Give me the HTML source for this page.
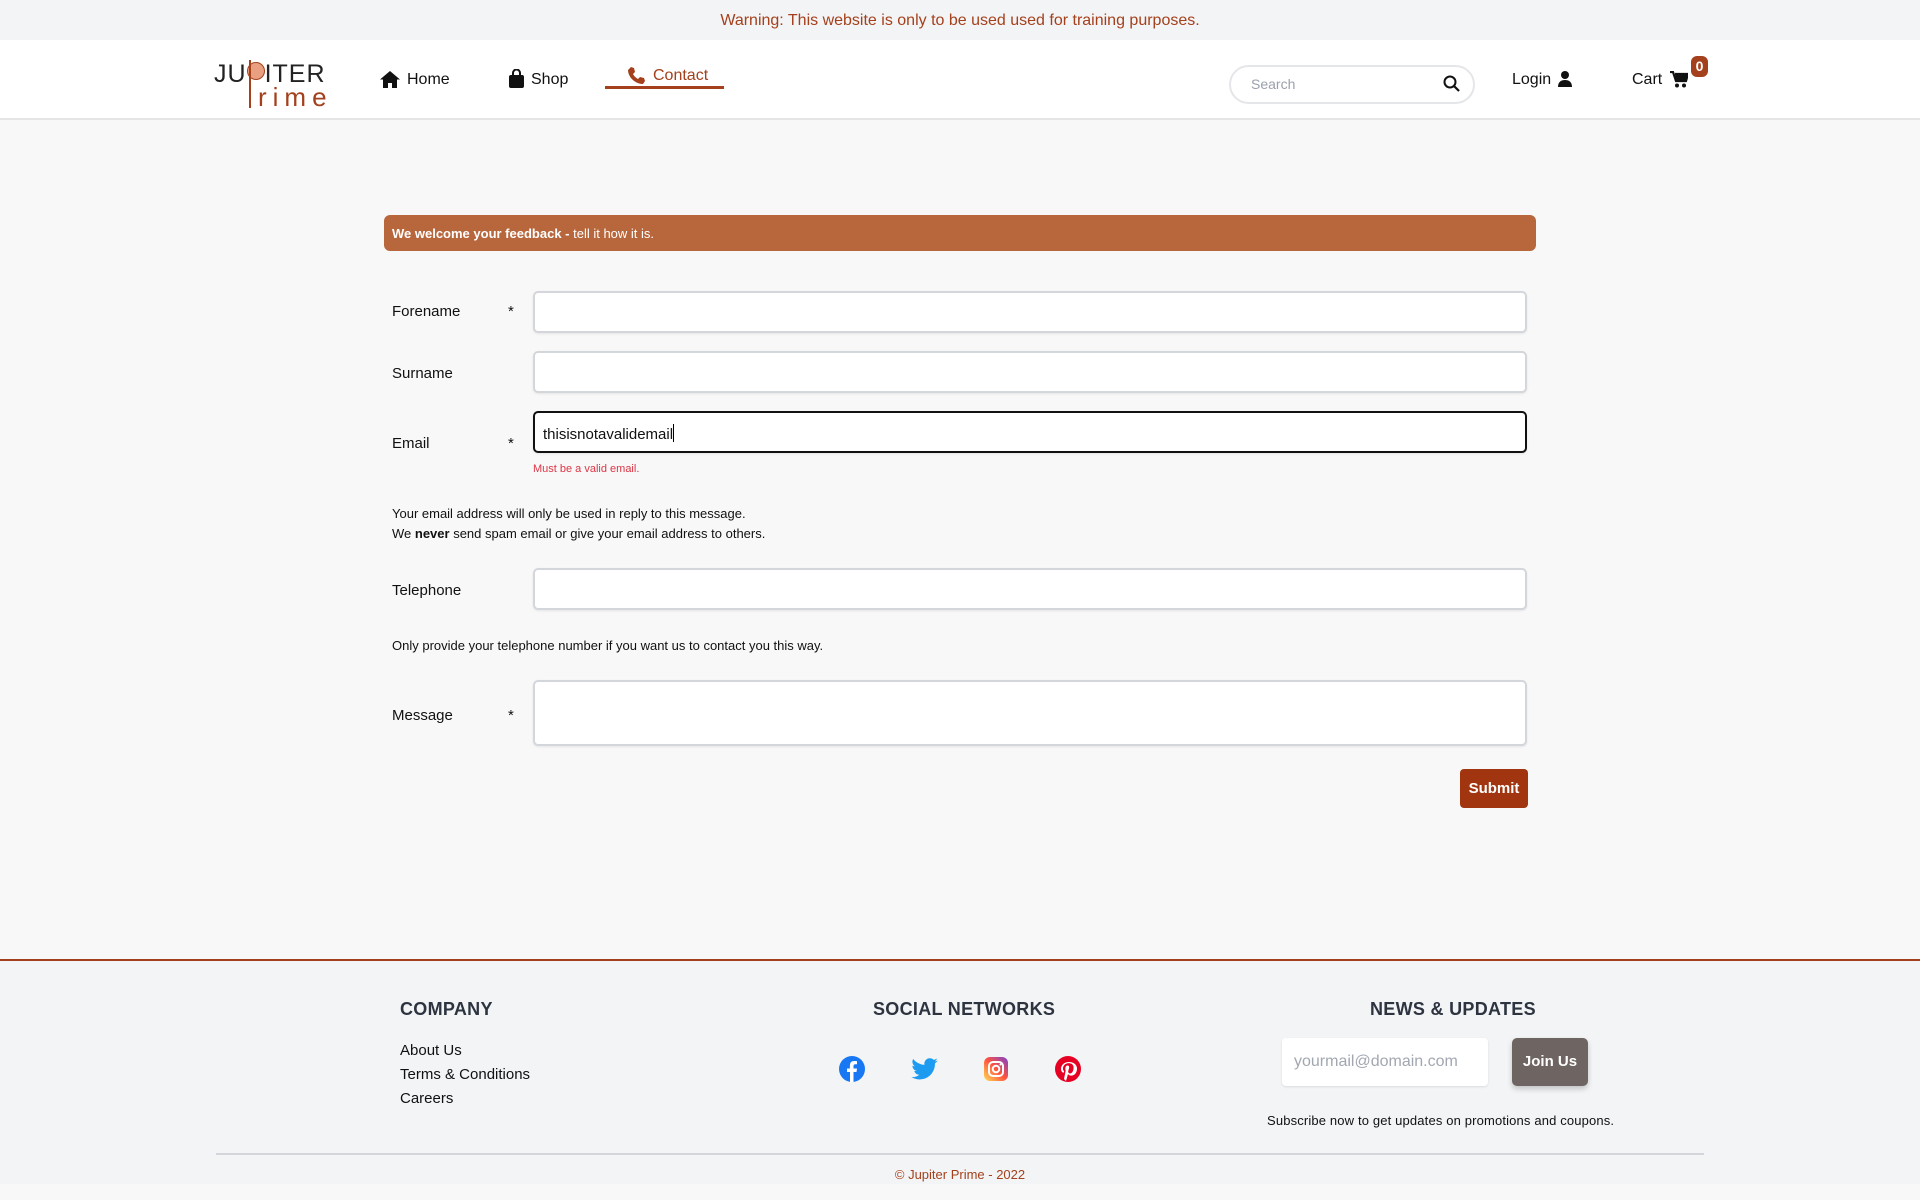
<!DOCTYPE html>
<html><head><meta charset="utf-8"><style>
*{box-sizing:border-box;margin:0;padding:0}
body{width:1920px;height:1200px;position:relative;background:#f8f8f8;font-family:"Liberation Sans",sans-serif;color:#111;overflow:hidden}
.a{position:absolute;white-space:nowrap}
.warn{left:0;top:0;width:1920px;height:40px;background:#f3f4f6;text-align:center;line-height:42px;font-size:16px;color:#a4401c}
.hdr{left:0;top:40px;width:1920px;height:80px;background:#fff;border-bottom:2px solid #e5e5e5}
.nav{font-size:16px;color:#111}
.inp{background:#fff;border:2px solid #d3d6da;border-radius:5px;box-shadow:0 1px 2px rgba(0,0,0,.08);left:533px;width:994px;height:42px}
.lbl{left:392px;font-size:15px}
.ast{left:508px;font-size:15px}
.help{left:392px;font-size:13px}
h4{font-weight:900;letter-spacing:.3px}
</style></head><body>
<div class="a warn">Warning: This website is only to be used used for training purposes.</div>
<div class="a hdr"></div>
<!-- logo -->
<div class="a" style="left:214px;top:60px;font-size:25px;letter-spacing:1px;color:#222;line-height:28px">JU<span style="display:inline-block;width:18px;height:18px;border-radius:50%;background:#e8a080;border:1px solid #a4401c;vertical-align:2px"></span>ITER</div>
<div class="a" style="left:249px;top:60px;width:2px;height:48px;background:#a4401c"></div>
<div class="a" style="left:258px;top:83px;font-size:26px;letter-spacing:6px;color:#a4401c;line-height:28px">rime</div>
<!-- nav -->
<svg class="a" style="left:380px;top:71px" width="20" height="17" viewBox="0 0 20 17"><path d="M10 0L0 8.5h3V17h5v-5h4v5h5V8.5h3z" fill="#111"/></svg>
<div class="a nav" style="left:407px;top:71px">Home</div>
<svg class="a" style="left:509px;top:69px" width="15" height="19" viewBox="0 0 15 19"><path d="M4 6V4a3.5 3.5 0 017 0v2" stroke="#111" stroke-width="2" fill="none"/><rect x="0" y="6" width="15" height="13" rx="2" fill="#111"/></svg>
<div class="a nav" style="left:531px;top:71px">Shop</div>
<svg class="a" style="left:628px;top:67px" width="17" height="17" viewBox="0 0 17 17"><path d="M3 0l3 1 1 4-2 2c1 2 3 4 5 5l2-2 4 1 1 3-2 3C7 17 0 10 0 3z" fill="#a4401c"/></svg>
<div class="a nav" style="left:653px;top:67px;color:#a4401c">Contact</div>
<div class="a" style="left:605px;top:86px;width:119px;height:3px;background:#a4401c"></div>
<!-- search -->
<div class="a" style="left:1229px;top:65px;width:246px;height:39px;border:2px solid #e5e6ea;border-radius:20px;background:#fff"></div>
<div class="a" style="left:1251px;top:76px;font-size:14px;color:#9aa0ad">Search</div>
<svg class="a" style="left:1443px;top:75px" width="17" height="17" viewBox="0 0 17 17"><circle cx="7" cy="7" r="5.5" stroke="#111" stroke-width="2" fill="none"/><path d="M11 11l5 5" stroke="#111" stroke-width="2.2"/></svg>
<div class="a nav" style="left:1512px;top:71px">Login</div>
<svg class="a" style="left:1558px;top:71px" width="14" height="16" viewBox="0 0 14 16"><circle cx="7" cy="4" r="4" fill="#111"/><path d="M0 16c0-5 3-7 7-7s7 2 7 7z" fill="#111"/></svg>
<div class="a nav" style="left:1632px;top:71px">Cart</div>
<svg class="a" style="left:1670px;top:71px" width="18" height="17" viewBox="0 0 18 17"><path d="M0 1h3l3 9h10l2-7H5" fill="none" stroke="#111" stroke-width="2.2"/><path d="M5 3h13l-2 7H6z" fill="#111"/><circle cx="7" cy="14.5" r="2" fill="#111"/><circle cx="14" cy="14.5" r="2" fill="#111"/></svg>
<div class="a" style="left:1691px;top:56px;width:17px;height:21px;border-radius:6px;background:#a4401c;color:#fff;font-weight:bold;font-size:14px;text-align:center;line-height:21px">0</div>
<!-- form -->
<div class="a" style="left:384px;top:215px;width:1152px;height:36px;background:#b8663c;border-radius:6px;color:#fff;font-size:13px;line-height:37px;padding-left:8px"><b>We welcome your feedback -</b> tell it how it is.</div>
<div class="a lbl" style="top:303px">Forename</div><div class="a ast" style="top:303px">*</div>
<div class="a inp" style="top:291px"></div>
<div class="a lbl" style="top:365px">Surname</div>
<div class="a inp" style="top:351px"></div>
<div class="a lbl" style="top:435px">Email</div><div class="a ast" style="top:435px">*</div>
<div class="a inp" style="top:411px;border-color:#111"></div>
<div class="a" style="left:543px;top:424px;font-size:15px">thisisnotavalidemail<span style="display:inline-block;width:1px;height:18px;background:#000;vertical-align:-3px"></span></div>
<div class="a" style="left:533px;top:463px;font-size:11px;color:#dc3545">Must be a valid email.</div>
<div class="a help" style="top:506px">Your email address will only be used in reply to this message.</div>
<div class="a help" style="top:526px">We <b>never</b> send spam email or give your email address to others.</div>
<div class="a lbl" style="top:582px">Telephone</div>
<div class="a inp" style="top:568px"></div>
<div class="a help" style="top:638px">Only provide your telephone number if you want us to contact you this way.</div>
<div class="a lbl" style="top:707px">Message</div><div class="a ast" style="top:707px">*</div>
<div class="a inp" style="top:680px;height:66px"></div>
<div class="a" style="left:1460px;top:769px;width:68px;height:39px;background:#a0350f;border-radius:4px;color:#fff;font-weight:bold;font-size:15px;text-align:center;line-height:40px">Submit</div>
<!-- footer -->
<div class="a" style="left:0;top:959px;width:1920px;height:225px;background:#f3f4f6;border-top:2px solid #a4401c"></div>
<h4 class="a" style="left:400px;top:999px;font-size:18px;color:#2d3440">COMPANY</h4>
<div class="a" style="left:400px;top:1042px;font-size:15px">About Us</div>
<div class="a" style="left:400px;top:1066px;font-size:15px">Terms &amp; Conditions</div>
<div class="a" style="left:400px;top:1090px;font-size:15px">Careers</div>
<h4 class="a" style="left:873px;top:999px;font-size:18px;color:#2d3440">SOCIAL NETWORKS</h4>
<svg class="a" style="left:839px;top:1056px" width="26" height="26" viewBox="0 0 26 26"><circle cx="13" cy="13" r="13" fill="#1877f2"/><path d="M14.5 26V16h3l.5-3.5h-3.5V10c0-1 .5-1.7 2-1.7H18V5.2c-.5-.1-1.6-.2-2.8-.2-2.7 0-4.3 1.6-4.3 4.5v3H8V16h3v10z" fill="#fff"/></svg>
<svg class="a" style="left:911px;top:1058px" width="27" height="22" viewBox="0 0 24 20"><path d="M24 2.4c-.9.4-1.8.6-2.8.8 1-.6 1.8-1.6 2.2-2.7-1 .6-2 1-3.1 1.2A4.9 4.9 0 0012 6.2 14 14 0 011.7.9a4.9 4.9 0 001.5 6.600c-.8 0-1.6-.3-2.2-.6 0 2.4 1.7 4.4 3.9 4.8-.7.2-1.5.2-2.2.1.6 2 2.4 3.4 4.6 3.4A9.9 9.9 0 010 17.3 14 14 0 007.5 19.5c9.1 0 14-7.5 14-14v-.6c1-.7 1.8-1.6 2.5-2.5z" fill="#1d9bf0"/></svg>
<svg class="a" style="left:984px;top:1057px" width="24" height="24" viewBox="0 0 24 24"><defs><linearGradient id="ig" x1="0" y1="1" x2="1" y2="0"><stop offset="0" stop-color="#fd5"/><stop offset=".5" stop-color="#ff543e"/><stop offset="1" stop-color="#7a3fd0"/></linearGradient></defs><rect width="24" height="24" rx="6" fill="url(#ig)"/><rect x="5" y="5" width="14" height="14" rx="4" fill="none" stroke="#fff" stroke-width="2"/><circle cx="12" cy="12" r="3.3" fill="none" stroke="#fff" stroke-width="2"/><circle cx="16.5" cy="7.5" r="1" fill="#fff"/></svg>
<svg class="a" style="left:1055px;top:1056px" width="26" height="26" viewBox="0 0 26 26"><circle cx="13" cy="13" r="13" fill="#e60023"/><path d="M11 25l2-7c.5 1 1.8 1.6 3 1.6 4 0 6-3.5 6-7 0-3.8-3.2-6.6-8-6.6-5.5 0-8 3.8-8 6.8 0 1.9.8 3.5 2.3 4 .2 0 .4 0 .5-.3l.2-.9c.1-.3 0-.4-.2-.7-.5-.6-.8-1.300-.8-2.3 0-3 2.2-5.5 5.8-5.5 3.1 0 4.8 1.9 4.8 4.4 0 3.3-1.5 6-3.6 6-1.2 0-2-1-1.8-2.2.3-1.4 1-3 1-4 0-1-.5-1.8-1.6-1.8-1.3 0-2.3 1.3-2.3 3.1 0 1.1.4 1.9.4 1.9L9 23z" fill="#fff"/></svg>
<h4 class="a" style="left:1370px;top:999px;font-size:18px;color:#2d3440">NEWS &amp; UPDATES</h4>
<div class="a" style="left:1282px;top:1038px;width:206px;height:48px;background:#fff;border-radius:4px;box-shadow:0 1px 2px rgba(0,0,0,.1);font-size:16px;color:#a2a7b0;line-height:48px;padding-left:12px">yourmail@domain.com</div>
<div class="a" style="left:1512px;top:1038px;width:76px;height:48px;background:#6e6562;border-radius:5px;box-shadow:0 3px 6px rgba(0,0,0,.2);color:#fff;font-weight:bold;font-size:15px;text-align:center;line-height:48px">Join Us</div>
<div class="a" style="left:1267px;top:1113px;font-size:13px;letter-spacing:.15px">Subscribe now to get updates on promotions and coupons.</div>
<div class="a" style="left:216px;top:1153px;width:1488px;height:2px;background:#d3d5da"></div>
<div class="a" style="left:0;top:1167px;width:1920px;text-align:center;font-size:13px;color:#a4401c">© Jupiter Prime - 2022</div>
</body></html>
